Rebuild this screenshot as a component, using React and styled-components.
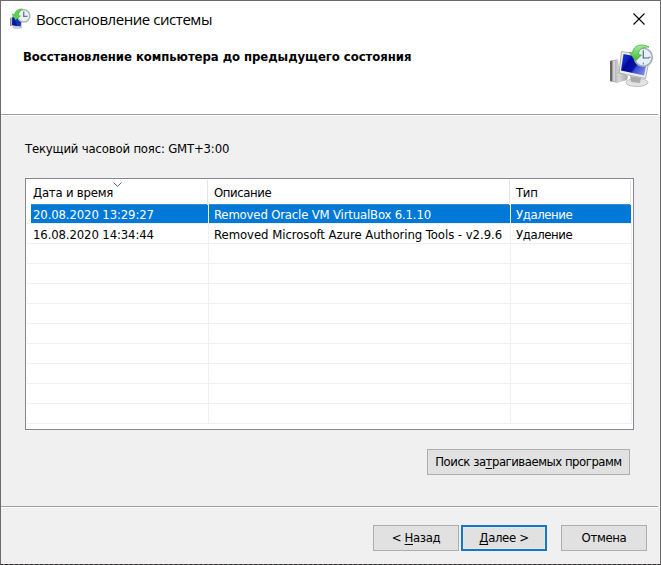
import styled, { createGlobalStyle } from "styled-components";

const GlobalStyle = createGlobalStyle`
  * {
    box-sizing: border-box;
  }
  body {
    margin: 0;
    overflow: hidden;
    background: #6b6b6b;
  }
`;

const Dialog = styled.main`
  display: flex;
  flex-direction: column;
  width: 661px;
  height: 565px;
  border: 1px solid #6b6b6b;
  border-bottom: 1px dashed #2e2a2a;
  background: #f0f0f0;
  background-clip: padding-box;
  color: #000;
  font: 13px/16px "DejaVu Sans Condensed", "DejaVu Sans", sans-serif;
  font-stretch: condensed;
  white-space: pre;
`;

const Top = styled.header`
  flex: none;
  height: 113px;
  background: #fff;
`;

const TitleBar = styled.div`
  display: flex;
  align-items: center;
  height: 36px;
  padding: 0 15px 0 8px;
`;

const Caption = styled.span`
  flex: 1;
  margin-left: 5px;
  font: 15px/20px "Open Sans", "Noto Sans", sans-serif;
  letter-spacing: -0.45px;
`;

const Intro = styled.div`
  display: flex;
  justify-content: space-between;
  padding: 5px 5px 0 22px;
`;

const Title = styled.h1`
  margin: 7px 0 0;
  font-size: 13px;
  line-height: 16px;
  letter-spacing: -0.06px;
`;

const Label = styled.span`
  letter-spacing: ${({ $track }) => $track || 0}px;
`;

const Divider = styled.div`
  flex: none;
  height: 2px;
  margin-right: 2px;
  border-top: 1px solid #a0a0a0;
  background: #fff;
`;

const Content = styled.section`
  flex: none;
  display: flex;
  flex-direction: column;
  height: 390px;
  padding: 25px 26px 0 24px;
`;

const Table = styled.div`
  flex: none;
  height: 252px;
  width: 609px;
  margin-top: 21px;
  padding: 1px;
  border: 1px solid #828790;
  background: #fff;
  overflow: hidden;
`;

const Columns = styled.div`
  display: grid;
  grid-template-columns: 181px 302px 121px;
  height: 24px;
  line-height: 25px;
`;

const Cell = styled.div`
  position: relative;
  padding-left: 6px;
  border-right: 1px solid #e5e5e5;
`;

const SortMark = styled.svg`
  position: absolute;
  top: 2px;
  left: 86px;
`;

const Row = styled.div`
  display: grid;
  grid-template-columns: 182px 302px 121px;
  width: 605px;
  height: 20px;
  border-bottom: 1px solid #f0f0f0;
  line-height: 21px;
`;

const RowCell = styled.div`
  height: 19px;
  margin-left: ${({ $first }) => ($first ? 4 : 0)}px;
  padding-left: ${({ $first }) => ($first ? 2 : 5)}px;
  border-right: 1px solid #f0f0f0;
  ${({ $selected }) =>
    $selected &&
    `
    background: #0078d7;
    background-clip: padding-box;
    color: #fff;
    box-shadow: inset 0 1px #3b8cc9;
  `}
`;

const Tools = styled.div`
  display: flex;
  justify-content: flex-end;
  margin-top: 19px;
  padding-right: 4px;
`;

const Footer = styled.footer`
  display: flex;
  justify-content: flex-end;
  padding: 17px 13px 0 0;
`;

const Button = styled.button`
  width: ${({ $width }) => $width || 86}px;
  height: 26px;
  margin: 0 0 0 ${({ $gap }) => $gap || 0}px;
  padding: 0;
  border: ${({ $primary }) => ($primary ? "2px solid #1c74ba" : "1px solid #adadad")};
  background: #e1e1e1;
  color: inherit;
  font: inherit;
  letter-spacing: ${({ $track }) => $track || -0.35}px;
  white-space: pre;
  ${({ $primary }) => $primary && "box-shadow: inset 0 0 0 1px #d5edf8;"}

  u {
    text-underline-offset: 2px;
  }
`;

const SmallRestoreIcon = () => (
  <svg width="22" height="22" viewBox="0 0 22 22">
    <path d="M1 10 3 9.500 3 18 1 18Z" fill="#8c9094" />
    <ellipse cx="8.500" cy="19.300" rx="5" ry="1.500" fill="#c9cccd" />
    <path d="M3 8.500 13 11 12 19 2.500 17.500Z" fill="#1632b8" stroke="#d5d9df" strokeWidth=".8" />
    <path d="M5.500 9.500 8 18 3.200 17 3.500 9.500Z" fill="#0618a0" />
    <circle cx="14.700" cy="7.800" r="6.200" fill="#e9eff2" stroke="#a9b2b7" strokeWidth="1.400" />
    <path d="M14.700 3.500V8.300H18.500" fill="none" stroke="#6c7a85" strokeWidth="1.300" />
    <path
      d="M13.500 1C9 .5 6 3 5.500 6.500L3 6 6.500 12 11.500 8 9.300 7.300C9.500 4 11 2.500 13.500 1Z"
      fill="#5fd24c"
      stroke="#3dab35"
      strokeWidth=".5"
    />
  </svg>
);

const RestoreIcon = () => (
  <svg width="48" height="48" viewBox="0 0 48 48">
    <defs>
      <linearGradient id="screen" x1="0" y1="0" x2="1" y2=".6">
        <stop offset="0" stopColor="#1c35c8" />
        <stop offset=".3" stopColor="#0a22bd" />
        <stop offset=".36" stopColor="#00089a" />
        <stop offset=".65" stopColor="#0713a8" />
        <stop offset=".7" stopColor="#3a4cd0" />
        <stop offset="1" stopColor="#7480e2" />
      </linearGradient>
      <linearGradient id="metal">
        <stop offset="0" stopColor="#8b8b8b" />
        <stop offset=".5" stopColor="#d8d8d8" />
        <stop offset="1" stopColor="#a5a5a5" />
      </linearGradient>
      <linearGradient id="arrow" x1="0" y1="0" x2="0" y2="1">
        <stop offset="0" stopColor="#a9eba0" />
        <stop offset="1" stopColor="#3fbb35" />
      </linearGradient>
    </defs>
    <path d="M3 19 11 17 13 30 21 34 20 38 10 41 3 39Z" fill="url(#metal)" />
    <path d="M3 19 5 18.5 5 39.5 3 39Z" fill="#666" />
    <path d="M7 19v20" stroke="#f2f2f2" />
    <ellipse cx="30" cy="40.5" rx="11" ry="4" fill="#e2e3e3" stroke="#aaa" strokeWidth=".7" />
    <path d="M23 34 34 36 33 41 24 40Z" fill="#a9abad" />
    <path d="M14.5 9.5 43 14 38.5 36.5 12 31Z" fill="#eceef0" stroke="#8d9195" strokeWidth=".7" />
    <path d="M16.5 12 40.5 16.5 37 33.5 14 28.5Z" fill="url(#screen)" />
    <circle cx="36.3" cy="15.3" r="9" fill="#e6f0f8" stroke="#a3adb5" strokeWidth="1.6" />
    <path d="M36.3 8v2M36.3 20.5v2M29 15.3h2M41.5 15.3h2" stroke="#6b7b88" />
    <path d="M36.3 9.5V16H42" fill="none" stroke="#566674" strokeWidth="1.2" />
    <path
      d="M42 5C35 1 26 3 25.500 11L22.500 10.500 28.500 19 34.500 13 31.500 12.500C31.500 7 36 5 42 5Z"
      fill="url(#arrow)"
      stroke="#3aa935"
      strokeWidth=".7"
    />
  </svg>
);

const CloseIcon = () => (
  <svg width="12" height="12" viewBox="0 0 12 12">
    <path d="M.5.5 11.5 11.5M11.5.5.5 11.5" stroke="#000" strokeWidth="1.1" />
  </svg>
);

const rows = [
  [
    { text: "20.08.2020 13:29:27", track: -0.12 },
    { text: "Removed Oracle VM VirtualBox 6.1.10", track: -0.17 },
    { text: "Удаление", track: -0.4 },
  ],
  [
    { text: "16.08.2020 14:34:44", track: -0.12 },
    { text: "Removed Microsoft Azure Authoring Tools - v2.9.6", track: -0.05 },
    { text: "Удаление", track: -0.4 },
  ],
  ...Array(9).fill([{}, {}, {}]),
];

const App = () => {
  return (
    <Dialog>
      <GlobalStyle />
      <Top>
        <TitleBar>
          <SmallRestoreIcon />
          <Caption>Восстановление системы</Caption>
          <CloseIcon />
        </TitleBar>
        <Intro>
          <Title>Восстановление компьютера до предыдущего состояния</Title>
          <RestoreIcon />
        </Intro>
      </Top>
      <Divider />
      <Content>
        <Label $track={-0.18}>Текущий часовой пояс: GMT+3:00</Label>
        <Table>
          <Columns>
            <Cell>
              <Label $track={-0.22}>Дата и время</Label>
              <SortMark width="9" height="5">
                <path d="M.5.5 4.5 4.5 8.5.5" fill="none" stroke="#666" />
              </SortMark>
            </Cell>
            <Cell>
              <Label $track={-0.4}>Описание</Label>
            </Cell>
            <Cell>
              <Label $track={-0.3}>Тип</Label>
            </Cell>
          </Columns>
          {rows.map((row, i) => (
            <Row key={i}>
              {row.map(({ text, track }, j) => (
                <RowCell key={j} $first={j === 0} $selected={i === 0}>
                  <Label $track={track}>{text}</Label>
                </RowCell>
              ))}
            </Row>
          ))}
        </Table>
        <Tools>
          <Button $width={203} $track={-0.48}>
            Поиск за<u>т</u>рагиваемых программ
          </Button>
        </Tools>
      </Content>
      <Divider />
      <Footer>
        <Button>
          &lt; <u>Н</u>азад
        </Button>
        <Button $primary $gap={2}>
          <u>Д</u>алее &gt;
        </Button>
        <Button $gap={14}>Отмена</Button>
      </Footer>
    </Dialog>
  );
};

export default App;
